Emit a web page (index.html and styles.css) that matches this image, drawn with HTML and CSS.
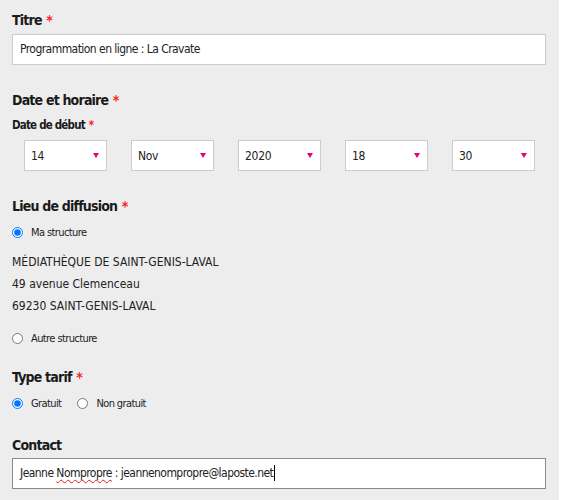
FILE: index.html
```
<!DOCTYPE html>
<html lang="fr">
<head>
<meta charset="utf-8">
<title>Formulaire</title>
<link rel="stylesheet" href="styles.css">
</head>
<body>
<form class="panel">
  <label class="heading">Titre <span class="req">*</span></label>
  <div class="field">Programmation en ligne : La Cravate</div>

  <div class="heading h-date">Date et horaire <span class="req">*</span></div>
  <div class="sublabel">Date de début <span class="req">*</span></div>
  <div class="selects">
    <div class="select"><span>14</span><i class="arrow"></i></div>
    <div class="select"><span>Nov</span><i class="arrow"></i></div>
    <div class="select"><span>2020</span><i class="arrow"></i></div>
    <div class="select"><span>18</span><i class="arrow"></i></div>
    <div class="select"><span>30</span><i class="arrow"></i></div>
  </div>

  <div class="heading h-lieu">Lieu de diffusion <span class="req">*</span></div>
  <label class="radio r-ma"><input type="radio" name="lieu" checked><span>Ma structure</span></label>
  <div class="address">
    <div>MÉDIATHÈQUE DE SAINT-GENIS-LAVAL</div>
    <div>49 avenue Clemenceau</div>
    <div>69230 SAINT-GENIS-LAVAL</div>
  </div>
  <label class="radio r-autre"><input type="radio" name="lieu"><span>Autre structure</span></label>

  <div class="heading h-tarif">Type tarif <span class="req">*</span></div>
  <div class="radios">
    <label class="radio"><input type="radio" name="tarif" checked><span>Gratuit</span></label>
    <label class="radio"><input type="radio" name="tarif"><span>Non gratuit</span></label>
  </div>

  <div class="heading h-contact">Contact</div>
  <div class="field focus">Jeanne <span class="spell">Nompropre</span> : jeannenompropre@laposte.net<span class="caret"></span></div>
</form>
</body>
</html>
```

FILE: styles.css
```
html, body {
  margin: 0;
  padding: 0;
  background: #ffffff;
}
body {
  font-family: "DejaVu Sans Condensed", "DejaVu Sans", sans-serif;
  color: #1e1e1e;
}
.panel {
  width: 559px;
  height: 500px;
  box-sizing: border-box;
  background: #ededed;
  padding: 10px 13px 0 12px;
  display: flex;
  flex-direction: column;
  align-items: stretch;
}
.heading {
  display: block;
  font-size: 14px;
  font-weight: bold;
  line-height: 20px;
  height: 20px;
  letter-spacing: -0.8px;
  color: #1a1a1a;
}
.req {
  color: #ff1a1a;
  margin-left: 1px;
}
.field {
  margin-top: 4px;
  height: 31px;
  box-sizing: border-box;
  border: 1px solid #cccccc;
  background: #fff;
  padding: 0 7px;
  font-size: 12px;
  letter-spacing: -0.55px;
  line-height: 29px;
  color: #222;
  white-space: nowrap;
}
.field.focus {
  margin-top: 3px;
  border-color: #8a8a8a;
}
.spell {
  text-decoration: underline wavy #e02020;
  text-decoration-thickness: 1px;
  text-underline-offset: 2px;
}
.caret {
  display: inline-block;
  width: 1px;
  height: 16px;
  background: #000;
  vertical-align: -4px;
  margin-left: 1px;
}
.h-date { margin-top: 25px; }
.sublabel {
  margin-top: 6px;
  font-size: 11.5px;
  font-weight: bold;
  letter-spacing: -0.8px;
  line-height: 18px;
  height: 18px;
  color: #1a1a1a;
}
.selects {
  margin-top: 6px;
  padding-left: 12px;
  display: flex;
  gap: 24px;
}
.select {
  position: relative;
  width: 83px;
  height: 31px;
  box-sizing: border-box;
  border: 1px solid #cccccc;
  background: #fff;
  padding-left: 6px;
  font-size: 12px;
  letter-spacing: -0.3px;
  line-height: 31px;
  color: #222;
}
.arrow {
  position: absolute;
  right: 7px;
  top: 12px;
  width: 0;
  height: 0;
  border-left: 3.5px solid transparent;
  border-right: 3.5px solid transparent;
  border-top: 5px solid #e6007e;
}
.h-lieu { margin-top: 25px; }
.radio {
  display: flex;
  align-items: center;
  height: 18px;
  font-size: 11px;
  letter-spacing: -0.6px;
  color: #222;
}
.radio input {
  width: 11px;
  height: 11px;
  margin: 0 8px 0 0;
  flex: none;
}
.r-ma { margin-top: 7px; }
.address {
  margin-top: 10px;
  font-size: 12px;
  line-height: 22px;
  color: #222;
}
.r-autre { margin-top: 12px; }
.h-tarif { margin-top: 20px; }
.radios {
  margin-top: 7px;
  display: flex;
  gap: 16px;
}
.h-contact { margin-top: 23px; }
```
